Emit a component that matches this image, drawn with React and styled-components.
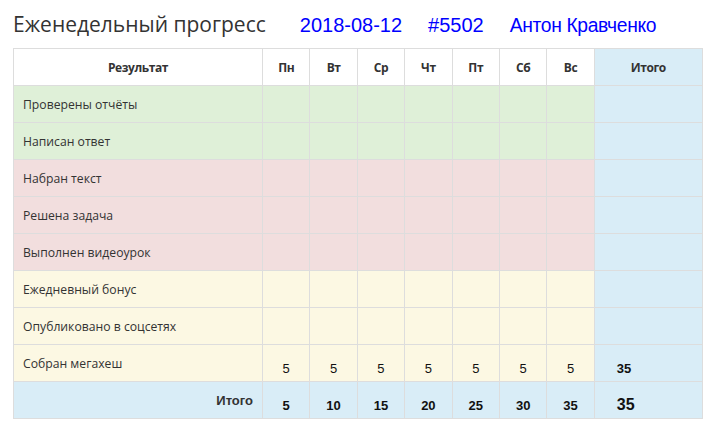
import React from "react";
import styled, { createGlobalStyle } from "styled-components";

const Global = createGlobalStyle`
  html, body { margin: 0; padding: 0; background: #fff; }
  body { font-family: "Open Sans", "Liberation Sans", sans-serif; color: #333; }
`;

const Page = styled.div`
  padding: 12px 13px 0 13px;
`;

const Heading = styled.div`
  display: flex;
  align-items: baseline;
  height: 36px;
`;

const Title = styled.h3`
  margin: 0 34px 0 0;
  font-family: "Open Sans", sans-serif;
  font-weight: 400;
  font-size: 21px;
  line-height: 24px;
  color: #333;
`;

const Meta = styled.span`
  font-family: "Liberation Sans", Arial, sans-serif;
  font-size: ${(p) => (p.$tight ? "19.3px" : "20px")};
  line-height: 24px;
  color: #0000ff;
  margin-right: 26px;
  letter-spacing: ${(p) => (p.$tight ? "-0.35px" : "0")};
`;

const Table = styled.table`
  border-collapse: collapse;
  table-layout: fixed;
  width: 689px;
  border: 1px solid #ddd;
`;

const palette = {
  green: "#dff0d8",
  red: "#f2dede",
  yellow: "#fcf8e3",
  blue: "#d9edf7",
  white: "#fff",
};

const Th = styled.th`
  height: 36px;
  padding: 0;
  border: 1px solid #ddd;
  font-family: "Open Sans", sans-serif;
  font-weight: 700;
  font-size: 12px;
  letter-spacing: -0.4px;
  color: #333;
  text-align: center;
  vertical-align: middle;
  background: ${(p) => palette[p.$tone || "white"]};
`;

const Row = styled.tr`
  background: ${(p) => palette[p.$tone]};
`;

const Label = styled.td`
  height: 36px;
  padding: 0 9px;
  border: 1px solid #ddd;
  font-size: 12.2px;
  color: #333;
  vertical-align: middle;
  white-space: nowrap;
`;

const TotalLabel = styled.td`
  height: 36px;
  padding: 0 9px 0 0;
  border: 1px solid #ddd;
  text-align: right;
  font-family: "Liberation Sans", Arial, sans-serif;
  font-weight: 700;
  font-size: 13px;
  color: #333;
`;

const Num = styled.td`
  height: 36px;
  padding: 10px 0 0 ${(p) => (p.$total ? "22px" : "0")};
  border: 1px solid #ddd;
  text-align: ${(p) => (p.$total ? "left" : "center")};
  font-family: "Liberation Sans", Arial, sans-serif;
  font-weight: ${(p) => (p.$bold ? 700 : 400)};
  font-size: ${(p) => (p.$big ? "16px" : "13px")};
  color: #111;
  vertical-align: middle;
  background: ${(p) => (p.$total ? palette.blue : "transparent")};
  box-sizing: border-box;
`;

const days = ["Пн", "Вт", "Ср", "Чт", "Пт", "Сб", "Вс"];

const rows = [
  { label: "Проверены отчёты", tone: "green" },
  { label: "Написан ответ", tone: "green" },
  { label: "Набран текст", tone: "red" },
  { label: "Решена задача", tone: "red" },
  { label: "Выполнен видеоурок", tone: "red" },
  { label: "Ежедневный бонус", tone: "yellow" },
  { label: "Опубликовано в соцсетях", tone: "yellow" },
  { label: "Собран мегахеш", tone: "yellow", values: [5, 5, 5, 5, 5, 5, 5], total: 35 },
];

const totals = [5, 10, 15, 20, 25, 30, 35];

export default function App() {
  return (
    <>
      <Global />
      <Page>
        <Heading>
          <Title>Еженедельный прогресс</Title>
          <Meta>2018-08-12</Meta>
          <Meta>#5502</Meta>
          <Meta $tight>Антон Кравченко</Meta>
        </Heading>
        <Table>
          <colgroup>
            <col style={{ width: 249 }} />
            {days.map((d) => (
              <col key={d} style={{ width: 47.4 }} />
            ))}
            <col style={{ width: 108 }} />
          </colgroup>
          <thead>
            <tr>
              <Th>Результат</Th>
              {days.map((d) => (
                <Th key={d}>{d}</Th>
              ))}
              <Th $tone="blue">Итого</Th>
            </tr>
          </thead>
          <tbody>
            {rows.map((r) => (
              <Row key={r.label} $tone={r.tone}>
                <Label>{r.label}</Label>
                {days.map((d, i) => (
                  <Num key={d}>{r.values ? r.values[i] : ""}</Num>
                ))}
                <Num $total $bold>{r.total ?? ""}</Num>
              </Row>
            ))}
            <Row $tone="blue">
              <TotalLabel>Итого</TotalLabel>
              {totals.map((t, i) => (
                <Num key={i} $bold>{t}</Num>
              ))}
              <Num $total $bold $big>35</Num>
            </Row>
          </tbody>
        </Table>
      </Page>
    </>
  );
}
